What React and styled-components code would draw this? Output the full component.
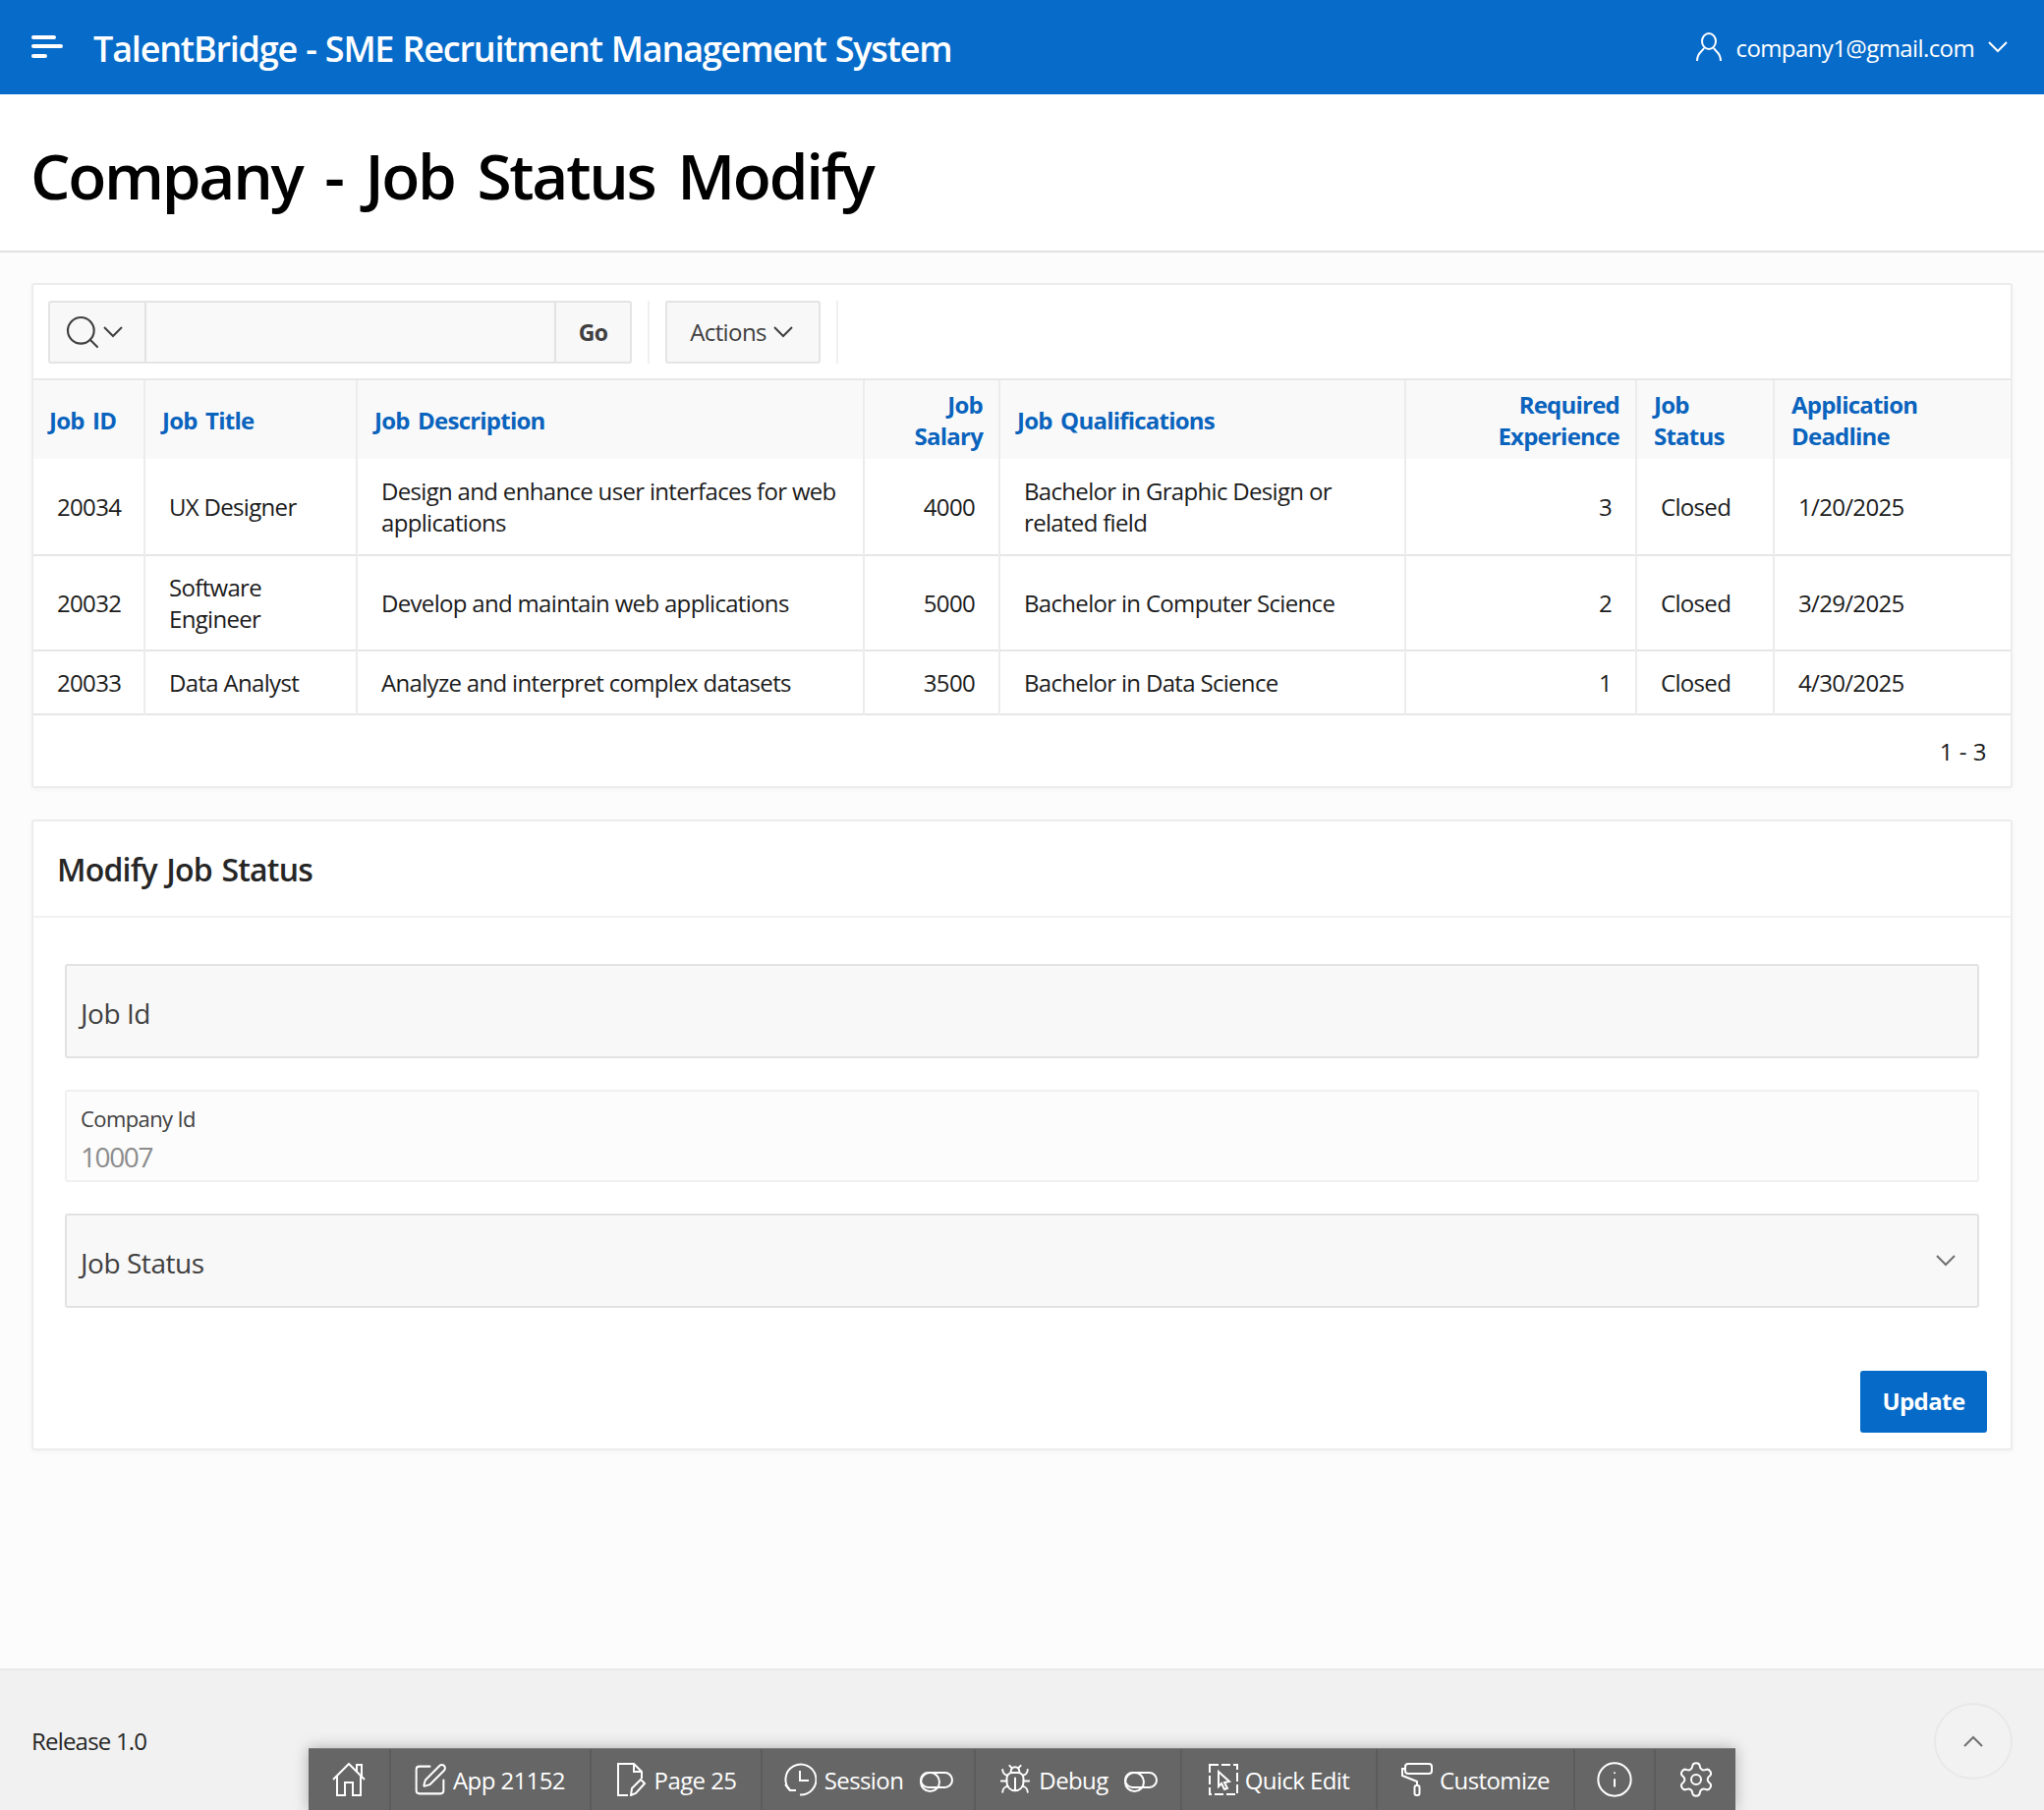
import React from 'react'
import styled, { createGlobalStyle } from 'styled-components'
import { SquarePen, Search, Bug, Info, Settings } from 'lucide-react'

const GlobalStyle = createGlobalStyle`
  html, body {
    margin: 0;
    padding: 0;
  }
  body {
    background: #fcfcfc;
    font-family: "Open Sans", "Noto Sans", "Liberation Sans", sans-serif;
    color: #1a1a1a;
  }
  * {
    box-sizing: border-box;
  }
`

const jobs = [
  {
    id: '20034',
    title: 'UX Designer',
    description: 'Design and enhance user interfaces for web applications',
    salary: '4000',
    qualifications: 'Bachelor in Graphic Design or related field',
    experience: '3',
    status: 'Closed',
    deadline: '1/20/2025',
    height: 98,
  },
  {
    id: '20032',
    title: 'Software Engineer',
    description: 'Develop and maintain web applications',
    salary: '5000',
    qualifications: 'Bachelor in Computer Science',
    experience: '2',
    status: 'Closed',
    deadline: '3/29/2025',
    height: 97,
  },
  {
    id: '20033',
    title: 'Data Analyst',
    description: 'Analyze and interpret complex datasets',
    salary: '3500',
    qualifications: 'Bachelor in Data Science',
    experience: '1',
    status: 'Closed',
    deadline: '4/30/2025',
    height: 65,
  },
]

const columns = [113, 216, 516, 138, 413, 235, 140, 241]

const Page = styled.div`
  position: relative;
  display: flex;
  flex-direction: column;
  min-height: 1842px;
  overflow: hidden;
`

const Header = styled.header`
  display: flex;
  align-items: center;
  justify-content: space-between;
  height: 96px;
  padding: 0 37px 0 32px;
  background: #076bc9;
  color: #fff;
  box-shadow: 0 2px 6px rgba(0, 0, 0, 0.12);
`

const Brand = styled.div`
  display: flex;
  align-items: center;
  gap: 31px;
`

const AppName = styled.span`
  padding-top: 2px;
  font-size: 36px;
  font-weight: 600;
  letter-spacing: -1.2px;
  word-spacing: 1px;
`

const UserMenu = styled.div`
  display: flex;
  align-items: center;
  gap: 14px;
  font-size: 24px;
  letter-spacing: -0.6px;
`

const TitleBar = styled.div`
  height: 161px;
  padding: 6px 31px 0;
  display: flex;
  align-items: center;
  background: #fff;
  border-bottom: 2px solid #e2e2e2;
`

const Title = styled.h1`
  margin: 0;
  font-size: 64px;
  font-weight: 600;
  color: #000;
  letter-spacing: -2.3px;
  word-spacing: 8.5px;
`

const Body = styled.main`
  flex: 1;
  display: flex;
  flex-direction: column;
  gap: 32px;
  padding: 31px 32px 0;
`

const Region = styled.section`
  background: #fff;
  border: 2px solid #ececec;
  border-radius: 3px;
  box-shadow: 0 2px 4px rgba(0, 0, 0, 0.03);
`

const Toolbar = styled.div`
  display: flex;
  align-items: center;
  height: 97px;
  padding: 0 15px;
  border-bottom: 2px solid #e8e8e8;
`

const SearchGroup = styled.div`
  display: flex;
  height: 64px;
  width: 594px;
  border: 2px solid #e4e4e4;
  border-radius: 3px;
  background: #f8f8f8;
`

const SearchButton = styled.div`
  display: flex;
  align-items: center;
  gap: 1px;
  width: 96px;
  padding-left: 13px;
  color: #404040;
`

const SearchInput = styled.div`
  flex: 1;
  background: #f9f9f9;
  border-left: 2px solid #e2e2e2;
  border-right: 2px solid #e2e2e2;
`

const GoButton = styled.div`
  display: flex;
  align-items: center;
  justify-content: center;
  width: 75px;
  font-size: 23px;
  font-weight: 700;
  color: #404040;
  letter-spacing: -0.6px;
`

const Divider = styled.div`
  width: 2px;
  height: 64px;
  margin: 0 16px;
  background: #f0f0f0;
`

const ActionsButton = styled.div`
  display: flex;
  align-items: center;
  justify-content: center;
  gap: 7px;
  width: 158px;
  height: 64px;
  padding-right: 3px;
  border: 2px solid #e4e4e4;
  border-radius: 3px;
  background: #f8f8f8;
  color: #404040;
  font-size: 24px;
  letter-spacing: -0.6px;
`

const Table = styled.table`
  width: 100%;
  table-layout: fixed;
  border-collapse: collapse;
`

const Col = styled.col`
  width: ${({ $width }) => $width}px;
`

const HeadCell = styled.th`
  height: 80px;
  padding: 2px 16px 0 ${({ $right }) => ($right ? 16 : 17)}px;
  background: #f9f9f9;
  border-left: 2px solid #ececec;
  color: #0a63bd;
  font-size: 24px;
  line-height: 32px;
  font-weight: 700;
  letter-spacing: -0.78px;
  word-spacing: 3px;
  text-align: ${({ $right }) => ($right ? 'right' : 'left')};
  &:first-child {
    border-left: 0;
    padding-left: 16px;
  }
`

const Row = styled.tr`
  height: ${({ $height }) => $height}px;
  border-bottom: 2px solid #e6e6e6;
`

const Cell = styled.td`
  padding: 0 24px;
  border-left: 2px solid #ececec;
  font-size: 24px;
  line-height: 32px;
  letter-spacing: -0.68px;
  color: #1c1c1c;
  text-align: ${({ $right }) => ($right ? 'right' : 'left')};
  &:first-child {
    border-left: 0;
  }
`

const Pagination = styled.div`
  display: flex;
  align-items: center;
  justify-content: flex-end;
  height: 72px;
  padding-right: 25px;
  font-size: 24px;
  letter-spacing: -0.5px;
  word-spacing: 1px;
`

const RegionHeader = styled.div`
  display: flex;
  align-items: center;
  height: 98px;
  padding: 0 24px;
  border-bottom: 2px solid #f2f2f2;
`

const RegionTitle = styled.h2`
  margin: 0;
  font-size: 32px;
  font-weight: 600;
  color: #262626;
  letter-spacing: -0.8px;
  word-spacing: 2px;
`

const Form = styled.div`
  display: flex;
  flex-direction: column;
  gap: 32px;
  padding: 47px 32px 0;
`

const Field = styled.div`
  display: flex;
  align-items: center;
  justify-content: space-between;
  height: ${({ $readOnly }) => ($readOnly ? 94 : 96)}px;
  padding: 0 22px 0 14px;
  background: ${({ $readOnly }) => ($readOnly ? '#fcfcfc' : '#f8f8f8')};
  border: 2px solid ${({ $readOnly }) => ($readOnly ? '#f0f0f0' : '#e2e2e2')};
  border-radius: 3px;
`

const FieldLabel = styled.span`
  padding-top: 4px;
  font-size: 28px;
  color: #404040;
  letter-spacing: -0.45px;
`

const SelectArrow = styled.span`
  display: flex;
  color: #707070;
`

const ReadOnlyStack = styled.div`
  display: flex;
  flex-direction: column;
  gap: 8px;
  padding-top: 5px;
`

const SmallLabel = styled.span`
  font-size: 22px;
  line-height: 28px;
  color: #404040;
  letter-spacing: -0.6px;
`

const ReadOnlyValue = styled.span`
  font-size: 28px;
  line-height: 34px;
  color: #8c8c8c;
  letter-spacing: -1.4px;
`

const ButtonRow = styled.div`
  display: flex;
  justify-content: flex-end;
  padding: 64px 24px 16px;
`

const UpdateButton = styled.button`
  width: 129px;
  height: 63px;
  padding: 0 0 2px;
  border: 0;
  border-radius: 3px;
  background: #056ac8;
  color: #fff;
  font-family: inherit;
  font-size: 24px;
  font-weight: 700;
  letter-spacing: -0.6px;
`

const Footer = styled.footer`
  display: flex;
  align-items: center;
  height: 144px;
  padding: 0 32px 0;
  background: #f1f1f1;
  border-top: 2px solid #e8e8e8;
  font-size: 24px;
  letter-spacing: -0.8px;
  color: #262626;
`

const ScrollTop = styled.div`
  position: absolute;
  right: 32px;
  bottom: 31px;
  display: flex;
  align-items: center;
  justify-content: center;
  width: 80px;
  height: 78px;
  border: 2px solid #e8e8e8;
  border-radius: 50%;
  background: #f2f2f2;
  color: #707070;
`

const DevBar = styled.nav`
  position: absolute;
  left: 314px;
  bottom: 0;
  display: flex;
  height: 63px;
  background: #666;
  border-top: 1px solid #7a7a7a;
  box-shadow: 0 0 14px rgba(0, 0, 0, 0.28);
  color: #fff;
  font-size: 24px;
  letter-spacing: -0.6px;
`

const DevItem = styled.div`
  display: flex;
  align-items: center;
  justify-content: center;
  gap: ${({ $gap }) => $gap || 6}px;
  width: ${({ $width }) => $width}px;
  padding-right: ${({ $pull }) => $pull || 0}px;
  border-left: 2px solid #5c5c5c;
  &:first-child {
    border-left: 0;
  }
`

const Toggle = styled.span`
  position: relative;
  display: inline-block;
  width: 34px;
  height: 17px;
  margin-left: ${({ $offset }) => $offset}px;
  border: 2px solid #fff;
  border-radius: 9px;
  &::before {
    content: '';
    position: absolute;
    left: -2px;
    top: -2px;
    width: 17px;
    height: 17px;
    border: 2px solid #fff;
    border-radius: 50%;
  }
`

const MenuIcon = () => (
  <svg width='32' height='24' viewBox='0 0 32 24' fill='#fff'>
    <rect x='0' y='0' width='25' height='4' rx='2' />
    <rect x='0' y='9' width='32' height='4' rx='2' />
    <rect x='0' y='19' width='16' height='4' rx='2' />
  </svg>
)

const UserIcon = () => (
  <svg width='26' height='30' viewBox='0 0 26 30' fill='none' stroke='#fff' strokeWidth='2'>
    <ellipse cx='13' cy='9' rx='7' ry='8' />
    <path d='M8 16 C6 20 1 20 1 29 M18 16 C20 20 25 20 25 29' />
  </svg>
)

const Chevron = ({ up }) => (
  <svg width='20' height='12' viewBox='0 0 20 12' fill='none' stroke='currentColor' strokeWidth='2'>
    <path d={up ? 'M1 11 L10 2 L19 11' : 'M1 1 L10 10 L19 1'} />
  </svg>
)

const HomeIcon = () => (
  <svg width='34' height='34' viewBox='0 0 34 34' fill='none' stroke='#fff' strokeWidth='2'>
    <path d='M1 17 L17 1 L33 17' />
    <path d='M25 9 V2 H30 V14' />
    <path d='M5 14 V33 H13 V20 H21 V33 H29 V14' />
  </svg>
)

const PageIcon = () => (
  <svg width='30' height='34' viewBox='0 0 30 34' fill='none' stroke='#fff' strokeWidth='2'>
    <path d='M12 33 H2 V1 H18 L26 9 V16' />
    <path d='M18 1 V9 H26' />
    <path d='M15 33 L16 26 L25 17 L29 21 L20 31 Z' />
  </svg>
)

const SessionIcon = () => (
  <svg width='34' height='34' viewBox='0 0 34 34' fill='none' stroke='#fff' strokeWidth='2'>
    <path d='M7 28 A15.5 15.5 0 1 1 17 32.5' />
    <path d='M2 22 L7 28 L13 28' />
    <path d='M17 8 V18 H26' />
  </svg>
)

const QuickEditIcon = () => (
  <svg width='30' height='32' viewBox='0 0 30 32' fill='none' stroke='#fff' strokeWidth='2'>
    <rect x='1' y='1' width='28' height='30' strokeDasharray='9 3' />
    <path d='M10 8 L21 18 L16 19 L19 25 L16 26 L13 20 L10 23 Z' />
  </svg>
)

const RollerIcon = () => (
  <svg width='32' height='34' viewBox='0 0 32 34' fill='none' stroke='#fff' strokeWidth='2'>
    <rect x='4' y='1' width='27' height='10' rx='3' />
    <path d='M4 6 H1 V13 L16 19 V23' />
    <rect x='13.5' y='23' width='5' height='10' rx='2' />
  </svg>
)

const App = () => {
  return (
    <Page>
      <GlobalStyle />
      <Header>
        <Brand>
          <MenuIcon />
          <AppName>TalentBridge - SME Recruitment Management System</AppName>
        </Brand>
        <UserMenu>
          <UserIcon />
          <span>company1@gmail.com</span>
          <Chevron />
        </UserMenu>
      </Header>
      <TitleBar>
        <Title>Company - Job Status Modify</Title>
      </TitleBar>
      <Body>
        <Region>
          <Toolbar>
            <SearchGroup>
              <SearchButton>
                <Search size={40} strokeWidth={1.3} />
                <Chevron />
              </SearchButton>
              <SearchInput />
              <GoButton>Go</GoButton>
            </SearchGroup>
            <Divider />
            <ActionsButton>
              Actions
              <Chevron />
            </ActionsButton>
            <Divider />
          </Toolbar>
          <Table>
            <colgroup>
              {columns.map((width, i) => (
                <Col key={i} $width={width} />
              ))}
            </colgroup>
            <thead>
              <tr>
                <HeadCell>Job ID</HeadCell>
                <HeadCell>Job Title</HeadCell>
                <HeadCell>Job Description</HeadCell>
                <HeadCell $right>
                  Job
                  <br />
                  Salary
                </HeadCell>
                <HeadCell>Job Qualifications</HeadCell>
                <HeadCell $right>
                  Required
                  <br />
                  Experience
                </HeadCell>
                <HeadCell>
                  Job
                  <br />
                  Status
                </HeadCell>
                <HeadCell>
                  Application
                  <br />
                  Deadline
                </HeadCell>
              </tr>
            </thead>
            <tbody>
              {jobs.map((job) => (
                <Row key={job.id} $height={job.height}>
                  <Cell>{job.id}</Cell>
                  <Cell>{job.title}</Cell>
                  <Cell>{job.description}</Cell>
                  <Cell $right>{job.salary}</Cell>
                  <Cell>{job.qualifications}</Cell>
                  <Cell $right>{job.experience}</Cell>
                  <Cell>{job.status}</Cell>
                  <Cell>{job.deadline}</Cell>
                </Row>
              ))}
            </tbody>
          </Table>
          <Pagination>1 - 3</Pagination>
        </Region>
        <Region>
          <RegionHeader>
            <RegionTitle>Modify Job Status</RegionTitle>
          </RegionHeader>
          <Form>
            <Field>
              <FieldLabel>Job Id</FieldLabel>
            </Field>
            <Field $readOnly>
              <ReadOnlyStack>
                <SmallLabel>Company Id</SmallLabel>
                <ReadOnlyValue>10007</ReadOnlyValue>
              </ReadOnlyStack>
            </Field>
            <Field>
              <FieldLabel>Job Status</FieldLabel>
              <SelectArrow>
                <Chevron />
              </SelectArrow>
            </Field>
          </Form>
          <ButtonRow>
            <UpdateButton>Update</UpdateButton>
          </ButtonRow>
        </Region>
      </Body>
      <Footer>Release 1.0</Footer>
      <ScrollTop>
        <Chevron up />
      </ScrollTop>
      <DevBar>
        <DevItem $width={82}>
          <HomeIcon />
        </DevItem>
        <DevItem $width={204} $gap={5} $pull={4}>
          <SquarePen size={37} strokeWidth={1.3} />
          App 21152
        </DevItem>
        <DevItem $width={174} $gap={9}>
          <PageIcon />
          Page 25
        </DevItem>
        <DevItem $width={217} $gap={8}>
          <SessionIcon />
          Session
          <Toggle $offset={9} />
        </DevItem>
        <DevItem $width={210} $gap={7}>
          <Bug size={34} strokeWidth={1.4} />
          Debug
          <Toggle $offset={9} />
        </DevItem>
        <DevItem $width={199} $gap={7}>
          <QuickEditIcon />
          Quick Edit
        </DevItem>
        <DevItem $width={201} $gap={7}>
          <RollerIcon />
          Customize
        </DevItem>
        <DevItem $width={82}>
          <Info size={40} strokeWidth={1.2} />
        </DevItem>
        <DevItem $width={83}>
          <Settings size={40} strokeWidth={1.2} />
        </DevItem>
      </DevBar>
    </Page>
  )
}

export default App
